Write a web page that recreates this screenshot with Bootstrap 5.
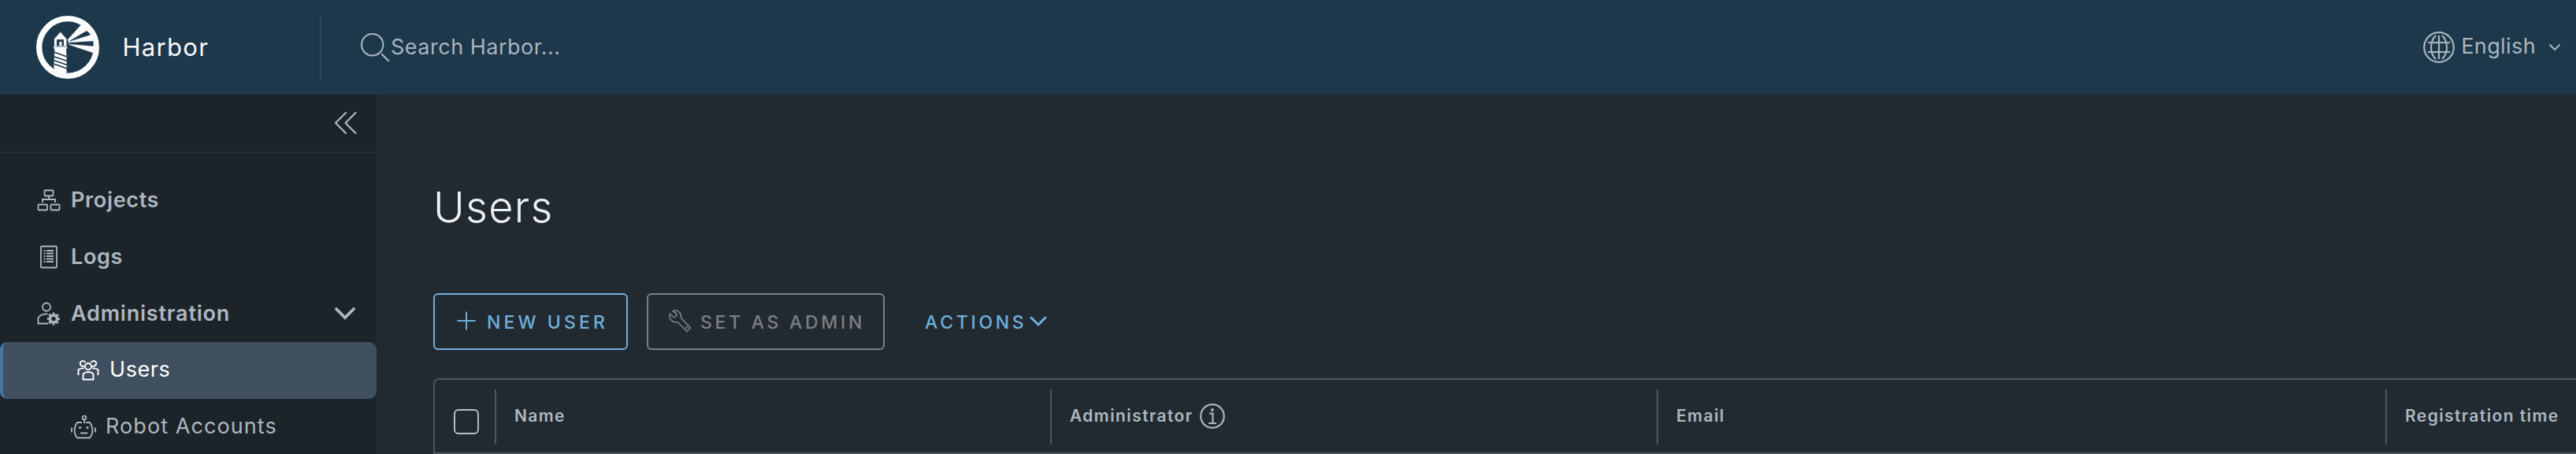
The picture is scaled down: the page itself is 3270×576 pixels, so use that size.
<!DOCTYPE html>
<html lang="en">
<head>
<meta charset="utf-8">
<title>Harbor</title>
<link href="https://cdn.jsdelivr.net/npm/bootstrap@5.3.0/dist/css/bootstrap.min.css" rel="stylesheet">
<style>
:root{--hdr:#1d374b;--side:#1c2329;--main:#222a31;--txt:#adb7c0;--line:#4c5763;--blue:#6eb0dd;--off:#7b7f82}
body{font-family:Inter,"Noto Sans",sans-serif;background:var(--main);color:var(--txt);height:576px;overflow:hidden;font-size:27px}
svg{fill:none;stroke:currentColor;flex:none;display:block}
.top-bar{height:120px;background:var(--hdr);color:#a9b5be}
.brand{width:408px;height:80px;padding-left:46px;border-right:2px solid #2f485b}
.brand-name{color:#fafafa;font-size:31px;letter-spacing:1.3px;margin-left:29.5px}
.search{padding-left:49px;letter-spacing:.5px}
.search span{margin-left:1px;padding-top:1px}
.lang{padding-right:19px;letter-spacing:.4px}
.lang span{margin:0 16px 2px 8px}
.side{width:478px;background:var(--side);height:456px}
.collapse-row{height:74px;border-bottom:2px solid #262d34;padding-right:25px}
.item{height:72px;padding-left:47px;padding-right:26px;font-weight:600;letter-spacing:.65px;color:#adb7c0}
.label-text{margin-left:13px}
.item .long{letter-spacing:.8px}
.sub-item{height:72px;padding-left:90px;letter-spacing:1.07px}
.sub-item span{padding-bottom:1px;margin-left:12px}
.sub-item.active{background:#3f4f60;color:#fff;border-left:4px solid #4277a3;border-radius:9px;padding-left:93px;letter-spacing:.55px}
.content{padding-left:72px;height:456px}
.page-title{font-weight:300;font-size:54px;line-height:60px;letter-spacing:1.3px;color:#eef0f2;margin:113px 0 79px}
.act{--bs-btn-border-width:2px;--bs-btn-border-radius:6px;--bs-btn-padding-x:0;--bs-btn-padding-y:0;--bs-btn-font-size:23px;height:72px;font-weight:500;display:flex;align-items:center;white-space:nowrap;line-height:1}
.act span{padding-top:2px}
.act-new{width:247px;--bs-btn-color:var(--blue);--bs-btn-border-color:var(--blue);letter-spacing:4.1px;padding-left:28px}
.act-new span{margin-left:14px}
.act-set{width:302px;--bs-btn-disabled-color:var(--off);--bs-btn-disabled-border-color:var(--off);--bs-btn-disabled-opacity:1;letter-spacing:3.7px;margin-left:24px;padding-left:25px}
.act-set span{margin-left:11px}
.act-more{--bs-btn-color:var(--blue);letter-spacing:3.7px;margin-left:49px}
.act-more svg{margin-left:4px}
.act-new svg,.act-set svg{margin-bottom:2px}
.grid-head{display:grid;grid-template-columns:76px 705px 770px 925px 1fr;height:96px;margin-top:36px;border:2px solid var(--line);border-right:0;border-top-left-radius:7px;font-size:21px;font-weight:600;letter-spacing:1.4px}
.cell{border-left:2px solid var(--line);height:70px;margin-top:12px;padding:0 0 3px 23px;white-space:nowrap}
.form-check-input.pick{width:32px;height:32px;margin:37px 0 0 24px;background:transparent;border:2px solid #b4bcc4;border-radius:6px}
</style>
</head>
<body>
<header class="top-bar d-flex align-items-center">
  <div class="brand d-flex align-items-center">
    <svg width="80" height="80" viewBox="0 0 240 240" stroke="none">
      <circle cx="120" cy="120" r="109" stroke="#fff" stroke-width="22"/>
      <path fill="#fff" d="M120 91 171 34 215 58 226 125 216 141 125 110z"/>
      <path fill="#fff" d="M92 62 115 88V116H117V125H114L115 153 116 226 67 215 70 125H67V116H69V88z"/>
      <g fill="#1d374b"><path d="M122 98 192 57Q203 64 207 73L130 97zM125 102 216 96Q219 105 218 116L125 108z"/><path d="M78 90h27v25H97V99H88V115H78z"/><path d="M72 116h42v2H72z"/></g>
      <path stroke="#1d374b" stroke-width="5" d="m69 139 46 16M69 156l47 16M69 170l47 17M69 184l48 17"/>
    </svg>
    <span class="brand-name">Harbor</span>
  </div>
  <div class="search d-flex align-items-center">
    <svg width="38" height="38" viewBox="0 0 38 38" stroke-width="2.100" stroke-linecap="round"><circle cx="15.700" cy="15.700" r="13.700"/><path stroke-width="2.400" d="m28 28 8 8"/></svg>
    <span>Search Harbor...</span>
  </div>
  <div class="lang d-flex align-items-center ms-auto">
    <svg width="40" height="40" viewBox="0 0 40 40" stroke-width="2.200"><circle cx="20" cy="20" r="18.800"/><path d="M20 5v30M6 14h28M6 26h28M16 5C8 13 8 27 16 35M24 5c8 8 8 22 0 30"/></svg>
    <span>English</span>
    <svg width="16" height="10" viewBox="0 0 16 10" stroke-width="2" stroke-linecap="round"><path d="m2 2 6 6 6-6"/></svg>
  </div>
</header>
<div class="d-flex">
  <nav class="side flex-shrink-0">
    <div class="collapse-row d-flex align-items-center justify-content-end mb-4">
      <svg width="29" height="28" viewBox="0 0 29 28" stroke-width="2.200" stroke-linecap="round" stroke-linejoin="round"><path d="M15 1 2 14l13 13M27.500 1 14.500 14l13 13"/></svg>
    </div>
    <div class="item d-flex align-items-center">
      <svg width="30" height="30" viewBox="0 0 30 30" stroke-width="1.800"><rect x="9.500" y="2.500" width="11" height="7" rx="1"/><rect x="1.500" y="20.500" width="11.500" height="7" rx="1"/><rect x="17.500" y="20.500" width="11" height="7" rx="1"/><path d="M15 10v4M7 18v-4h16v4"/></svg>
      <span class="label-text">Projects</span>
    </div>
    <div class="item d-flex align-items-center">
      <svg width="30" height="30" viewBox="0 0 30 30" stroke-width="1.800"><rect x="5" y="1.500" width="20" height="27" rx="1"/><path d="M12 7h9M12 10.500h9M12 14h9M12 17.500h9M12 21h9M8.500 7h2M8.500 10.500h2M8.500 14h2M8.500 17.500h2M8.500 21h2"/></svg>
      <span class="label-text">Logs</span>
    </div>
    <div class="item d-flex align-items-center">
      <svg width="30" height="30" viewBox="0 0 30 30" stroke-width="1.800"><circle cx="12" cy="6.500" r="5"/><path d="M13.500 15.500C8 15 4 17 1.500 20v7.500h12.500"/><circle cx="21" cy="21.500" r="4.500" stroke-width="3.500"/><circle cx="21" cy="21.500" r="7" stroke-width="2.200" stroke-dasharray="3 2.498" stroke-dashoffset="1.500"/></svg>
      <span class="label-text long">Administration</span>
      <svg class="ms-auto" width="28" height="18" viewBox="0 0 28 18" stroke-width="3.800" stroke-linecap="round"><path d="m3 3 11 11L25 3"/></svg>
    </div>
    <div class="sub-item active d-flex align-items-center">
      <svg width="30" height="30" viewBox="0 0 30 30" stroke-width="1.900"><circle cx="15" cy="10" r="4"/><path d="M8.500 26.500V20c2-4 11-4 13 0v6.500zM10 9.500C4 11 3 3 8 3c2 0 3 1 3.500 2M20 9.500C26 11 27 3 22 3c-2 0-3 1-3.500 2M2.500 21v-7c2-1.500 4-1.800 7-1.500M27.500 21v-7c-2-1.500-4-1.800-7-1.500"/></svg>
      <span>Users</span>
    </div>
    <div class="sub-item d-flex align-items-center">
      <svg width="32" height="32" viewBox="0 0 32 32" stroke-width="1.800"><circle cx="17" cy="4" r="2.300"/><path d="M17 6.300V11M14 10H8C3.500 16 3.500 24 8 29.500h16c4.500-5.500 4.500-13.500 0-19.500h-5M1 16.500v6M31 16.500v6"/><path stroke-width="2" d="M12 23.500h9"/><g fill="currentColor" stroke="none"><circle cx="11.500" cy="16.500" r="1.600"/><circle cx="21" cy="16.500" r="1.600"/></g></svg>
      <span>Robot Accounts</span>
    </div>
  </nav>
  <main class="content flex-grow-1">
    <h2 class="page-title">Users</h2>
    <div class="d-flex">
      <button class="btn act act-new"><svg width="24" height="24" viewBox="0 0 24 24" stroke-width="2"><path d="M12 .5v23M.5 12h23"/></svg><span>NEW USER</span></button>
      <button class="btn act act-set" disabled><svg width="30" height="30" viewBox="0 0 30 30" stroke-width="1.700" stroke-linejoin="round"><path d="M6 2.500C11 .3 17.500 4 16.500 11.500L28.500 23.800 24 28.500 12 16.500C5 18 .5 12 2.500 6L7 10.500H8.500L11 8V6.500z"/><circle cx="23.500" cy="23.500" r=".6"/></svg><span>SET AS ADMIN</span></button>
      <button class="btn act act-more"><span>ACTIONS</span><svg width="22" height="14" viewBox="0 0 22 14" stroke-width="3" stroke-linecap="round"><path d="m2 2 9 9 9-9"/></svg></button>
    </div>
    <div class="grid-head">
      <div><input class="form-check-input pick d-block" type="checkbox" aria-label="Select all"></div>
      <div class="cell d-flex align-items-center">Name</div>
      <div class="cell d-flex align-items-center">Administrator
        <svg class="ms-2" width="32" height="32" viewBox="0 0 32 32" stroke-width="2.200"><circle cx="16" cy="16" r="14.800"/><path d="M12 12.500h4.500V25M11 25h10"/><circle cx="16" cy="8" r="1.900" fill="currentColor" stroke="none"/></svg>
      </div>
      <div class="cell d-flex align-items-center">Email</div>
      <div class="cell d-flex align-items-center">Registration time</div>
    </div>
  </main>
</div>
<script src="https://cdn.jsdelivr.net/npm/bootstrap@5.3.0/dist/js/bootstrap.bundle.min.js"></script>
</body>
</html>
